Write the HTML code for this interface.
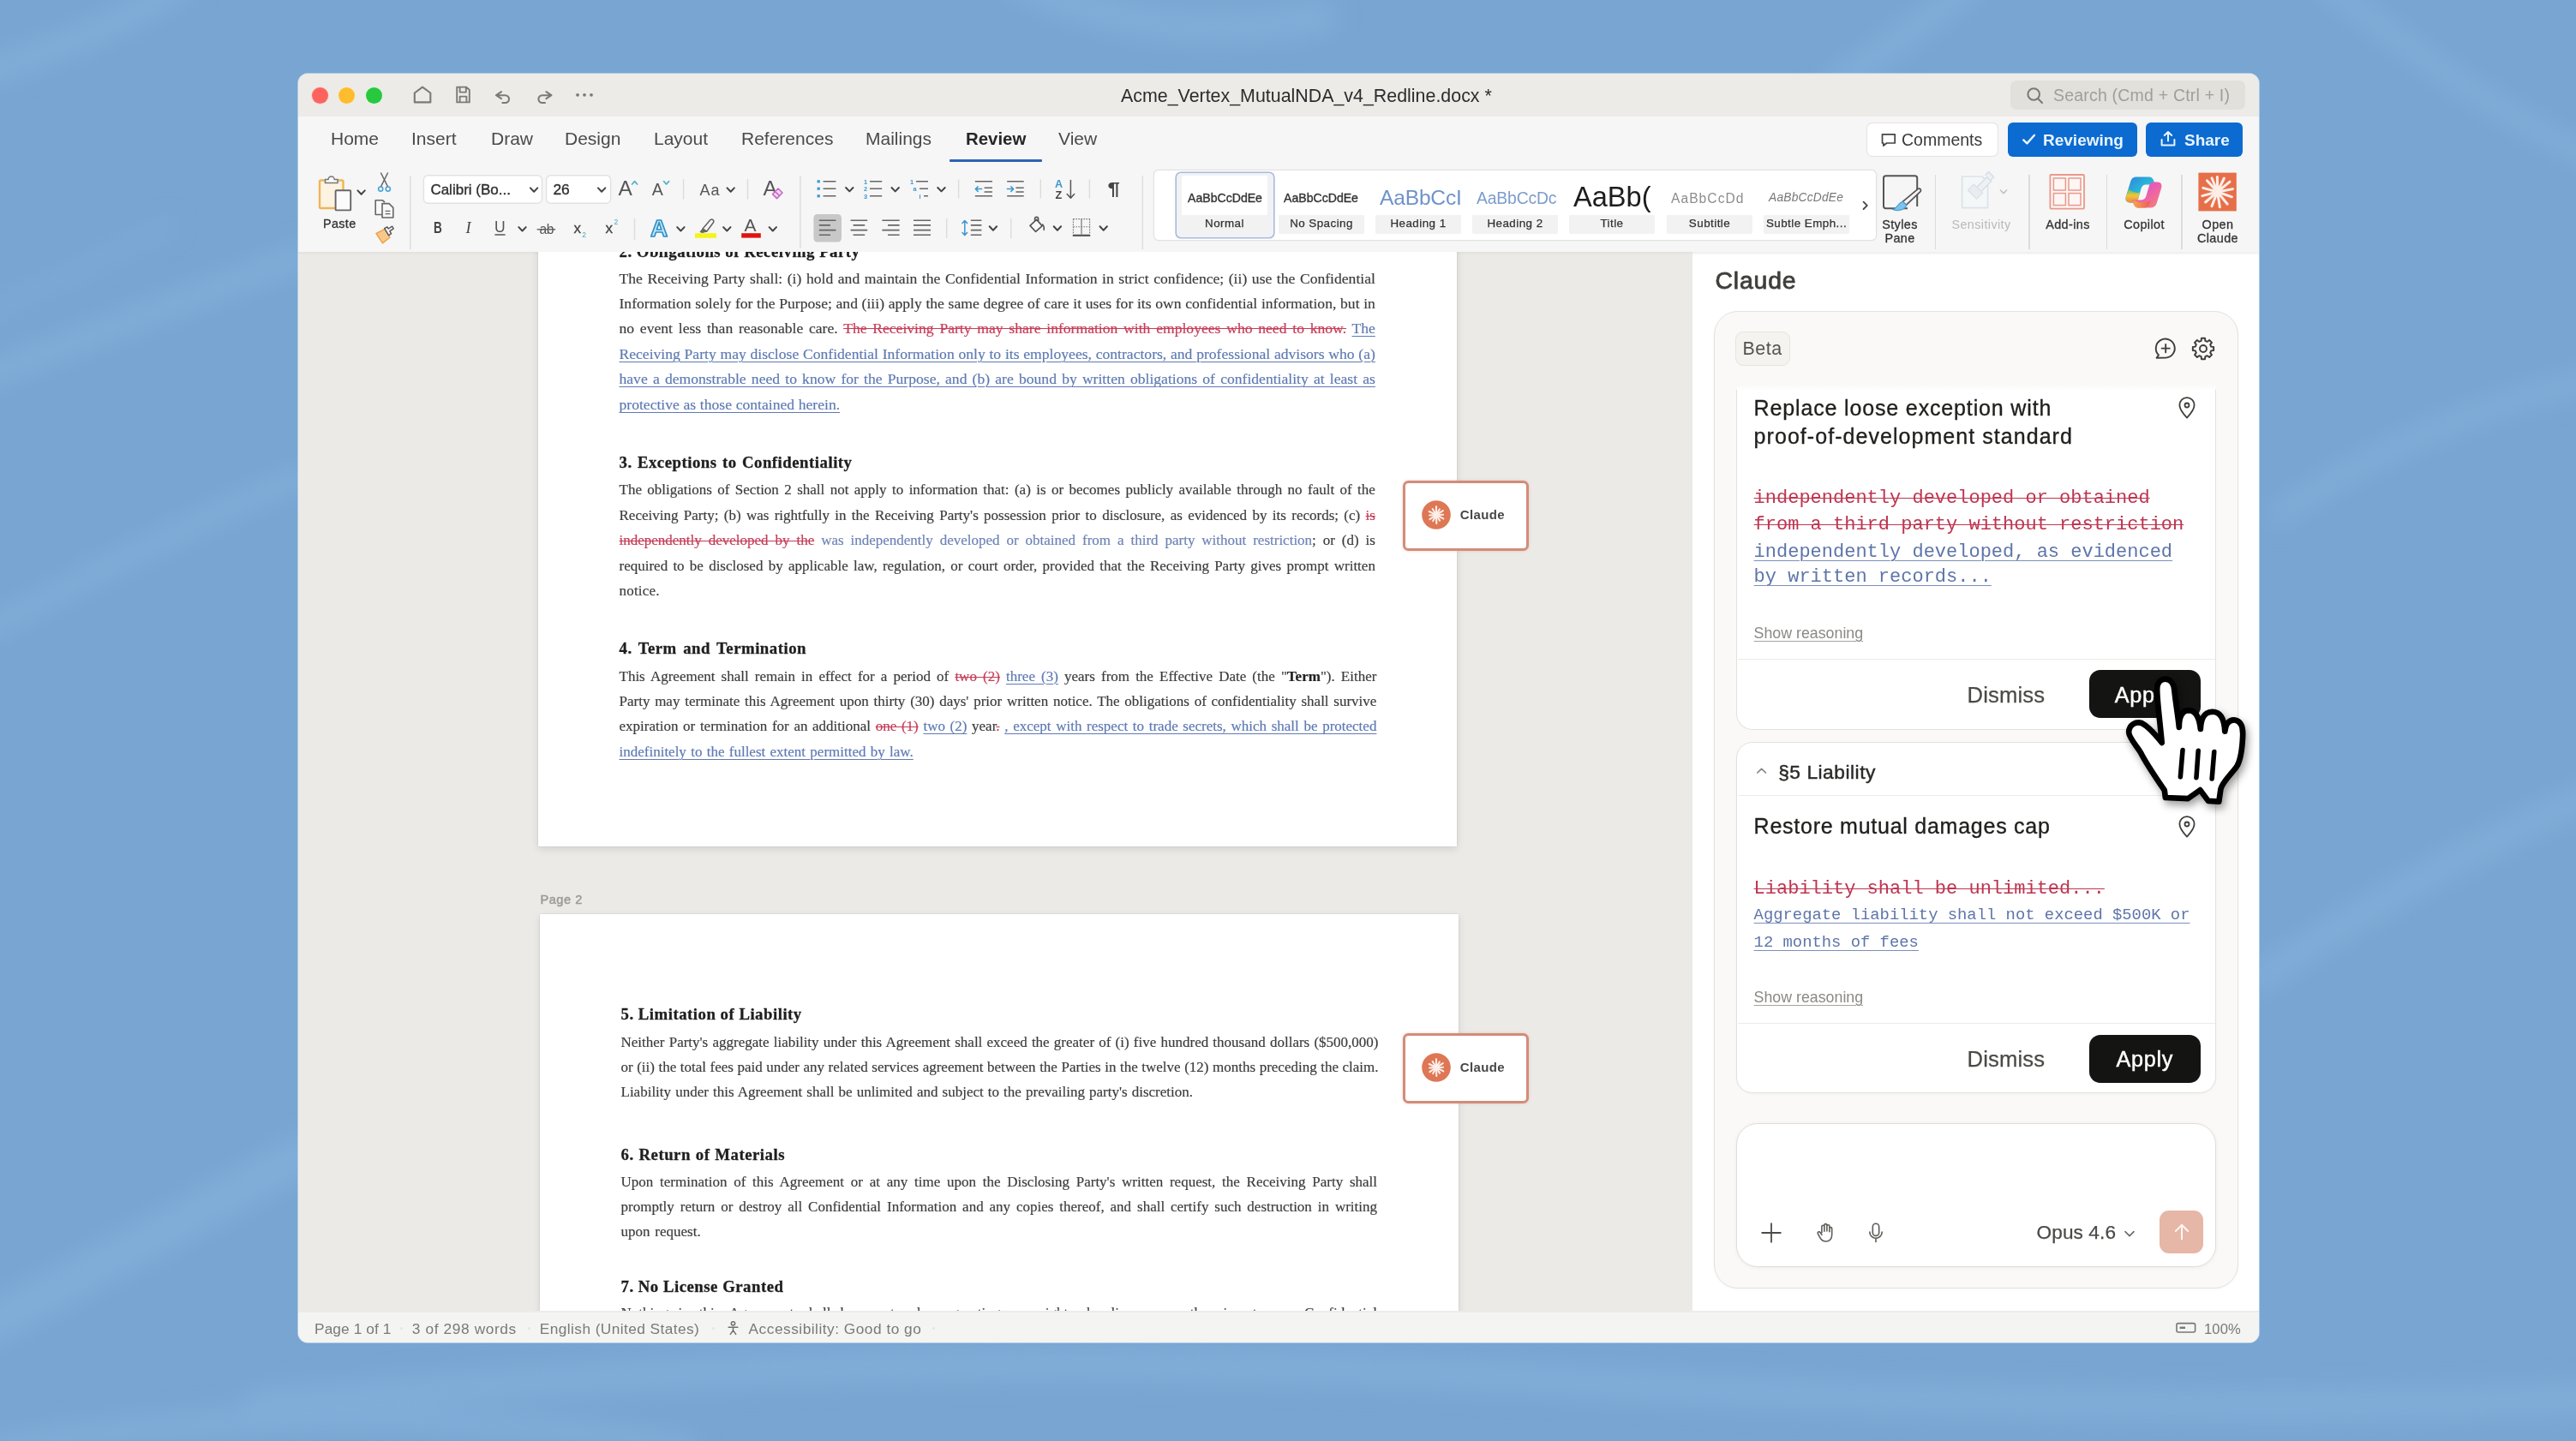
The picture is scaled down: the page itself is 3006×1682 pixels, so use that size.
<!DOCTYPE html>
<html lang="en">
<head>
<meta charset="utf-8">
<title>Acme_Vertex_MutualNDA_v4_Redline.docx</title>
<style>
*{box-sizing:border-box;margin:0;padding:0}
html,body{width:3006px;height:1682px;overflow:hidden}
body{background:#78a5d1;font-family:"Liberation Sans",sans-serif;position:relative;color:#222}
.a{position:absolute}
.t{position:absolute;white-space:nowrap;line-height:1}
#bg{position:absolute;left:0;top:0;width:3006px;height:1682px}
#win{position:absolute;left:348px;top:86px;width:2288px;height:1481px;border-radius:11.5px;overflow:hidden;background:#f6f6f6;box-shadow:0 0 0 1px rgba(225,238,250,.5)}
#pg{position:absolute;left:-348px;top:-86px;width:3006px;height:1682px;will-change:transform}
/* document */
.dl{position:absolute;white-space:nowrap;font-family:"Liberation Serif",serif;font-size:17px;line-height:24px;height:24px;color:#3c3c3c;-webkit-text-stroke:.18px currentColor;text-align:justify;text-align-last:justify;overflow:visible}
.dh{position:absolute;white-space:nowrap;font-family:"Liberation Serif",serif;font-weight:bold;font-size:18.8px;letter-spacing:.5px;line-height:24px;height:24px;color:#1e1e1e;-webkit-text-stroke:.3px #1e1e1e;text-align:justify;text-align-last:justify}
.del{color:#c63c57;text-decoration:line-through;text-decoration-thickness:1.2px}
.ins{color:#5f7ab3;text-decoration:underline;text-decoration-thickness:1.1px;text-underline-offset:3px}
.insn{color:#6e84b6}
.mono{font-family:"Liberation Mono",monospace}
</style>
</head>
<body>
<svg id="bg" viewBox="0 0 3006 1682">
<defs><filter id="bl" x="-20%" y="-20%" width="140%" height="140%"><feGaussianBlur stdDeviation="14"/></filter></defs>
<rect width="3006" height="1682" fill="#78a5d1"/>
<g filter="url(#bl)" fill="none" stroke="#86b2de" stroke-linecap="round" opacity=".6">
<path d="M-40 92 C 60 60, 140 30, 215 -20" stroke-width="32"/>
<path d="M-40 448 C 80 402, 220 348, 352 300" stroke-width="30"/>
<path d="M-40 748 C 80 684, 220 612, 352 556" stroke-width="26"/>
<path d="M-40 380 C 40 340, 120 300, 200 262" stroke-width="12"/>
<path d="M1180 -30 C 1260 20, 1400 50, 1540 20" stroke-width="40"/>
<path d="M2700 -30 C 2800 50, 2920 140, 3060 200" stroke-width="26"/>
<path d="M2140 100 C 2195 62, 2250 24, 2305 -24" stroke-width="32"/>
<path d="M2660 600 C 2780 520, 2900 470, 3040 440" stroke-width="26"/>
<path d="M2640 1140 C 2760 1060, 2880 990, 3040 920" stroke-width="34"/>
<path d="M-60 1570 C 80 1500, 220 1420, 350 1350" stroke-width="48"/>
<path d="M300 1640 C 800 1590, 1300 1580, 1800 1610 C 2200 1640, 2700 1650, 3060 1630" stroke-width="36"/>
<path d="M-40 1700 C 200 1650, 500 1640, 800 1690" stroke-width="30"/>
</g>
</svg>
<div id="win"><div id="pg">
<!-- title bar -->
<div class="a" style="left:348px;top:85px;width:2288px;height:51px;background:#ecebe8"></div>
<div class="a" style="left:363.6px;top:101.6px;width:19px;height:19px;border-radius:50%;background:#fd635d;box-shadow:0 0 0 1px rgba(255,200,200,.5)"></div>
<div class="a" style="left:395.2px;top:101.6px;width:19px;height:19px;border-radius:50%;background:#febc2e;box-shadow:0 0 0 1px rgba(255,235,200,.5)"></div>
<div class="a" style="left:427px;top:101.6px;width:19px;height:19px;border-radius:50%;background:#28c840;box-shadow:0 0 0 1px rgba(200,255,210,.5)"></div>
<svg class="a" style="left:470px;top:92px" width="240" height="40" viewBox="470 92 240 40" fill="none" stroke="#7c7a76" stroke-width="2.1" stroke-linejoin="round" stroke-linecap="round">
<path d="M483.8 119.4 V108.5 L493 101.6 L502.3 108.5 V119.4 Z"/>
<path d="M533.2 101.6 H544.2 L547.8 105 V119.4 H533.2 Z M536.6 101.8 V107.6 H543.8 V101.8 M536.6 119.2 V112.6 H544.4 V119.2" stroke-width="1.9"/>
<path d="M585 107.2 L579 111.2 L585 115.2 M579.4 111.2 H589.6 a4.4 4.4 0 0 1 0 8.8 H586.4"/>
<path d="M637.4 107.2 L643.4 111.2 L637.4 115.2 M643 111.2 H632.8 a4.4 4.4 0 0 0 0 8.8 H636"/>
<g fill="#7c7a76" stroke="none"><circle cx="674" cy="110.8" r="1.9"/><circle cx="682" cy="110.8" r="1.9"/><circle cx="690" cy="110.8" r="1.9"/></g>
</svg>
<div class="t" style="left:1308px;top:102px;font-size:21.4px;color:#2c2c2c;letter-spacing:0px">Acme_Vertex_MutualNDA_v4_Redline.docx *</div>
<div class="a" style="left:2346px;top:94px;width:274px;height:34px;border-radius:7px;background:#e2e0db"></div>
<svg class="a" style="left:2362px;top:99px" width="26" height="26" viewBox="0 0 26 26" fill="none" stroke="#7a7874" stroke-width="2" stroke-linecap="round"><circle cx="11.2" cy="11" r="6.8"/><path d="M16.2 16.2 L21 21"/></svg>
<div class="t" style="left:2396px;top:102.4px;font-size:19.5px;color:#a09e9a;letter-spacing:.2px">Search (Cmd + Ctrl + I)</div>
<!-- tabs row -->
<div class="a" style="left:348px;top:136px;width:2288px;height:158px;background:#f6f6f6"></div>
<style>.tab{position:absolute;top:150px;font-size:21px;line-height:24px;color:#4a4a4a;white-space:nowrap}</style>
<div class="tab" style="left:386px">Home</div>
<div class="tab" style="left:480px">Insert</div>
<div class="tab" style="left:573px">Draw</div>
<div class="tab" style="left:659px">Design</div>
<div class="tab" style="left:763px">Layout</div>
<div class="tab" style="left:865px">References</div>
<div class="tab" style="left:1010px">Mailings</div>
<div class="tab" style="left:1127px;font-weight:bold;color:#262626;font-size:20.4px">Review</div>
<div class="tab" style="left:1235px">View</div>
<div class="a" style="left:1108px;top:186px;width:108.4px;height:3.4px;background:#2f62b4;border-radius:1px"></div>
<!-- right buttons -->
<div class="a" style="left:2179px;top:144px;width:152px;height:38px;border-radius:6px;background:#fff;box-shadow:0 0 0 1px #e4e3e1"></div>
<svg class="a" style="left:2195px;top:155px" width="18" height="18" viewBox="0 0 18 18" fill="none" stroke="#444" stroke-width="1.7" stroke-linejoin="round"><path d="M1.5 1.8 H16.2 V12 H6.6 L2.8 15.2 V12 H1.5 Z"/></svg>
<div class="t" style="left:2219px;top:154px;font-size:19.5px;color:#3a3a3a">Comments</div>
<div class="a" style="left:2343px;top:143px;width:151px;height:40px;border-radius:6px;background:#0b6bd0"></div>
<svg class="a" style="left:2359px;top:154px" width="18" height="18" viewBox="0 0 18 18" fill="none" stroke="#e8f4ff" stroke-width="2.4" stroke-linecap="round" stroke-linejoin="round"><path d="M2.2 9.4 L6.4 13.4 L15 3.8"/></svg>
<div class="t" style="left:2384px;top:154px;font-size:19px;font-weight:bold;color:#e8f4ff">Reviewing</div>
<div class="a" style="left:2504px;top:143px;width:113px;height:40px;border-radius:6px;background:#0b6bd0"></div>
<svg class="a" style="left:2520px;top:152px" width="20" height="20" viewBox="0 0 20 20" fill="none" stroke="#e8f4ff" stroke-width="2" stroke-linecap="round" stroke-linejoin="round"><path d="M10 12.5 V2.2 M5.8 6 L10 2 L14.2 6 M2.6 11 V17.4 H17.4 V11"/></svg>
<div class="t" style="left:2549px;top:154px;font-size:19px;font-weight:bold;color:#e8f4ff">Share</div>
<!-- ribbon left -->
<svg class="a" style="left:348px;top:190px" width="1000" height="104" viewBox="348 190 1000 104" fill="none" font-family="Liberation Sans, sans-serif">
<defs>
<path id="cv" d="M-4.2 -2.2 L0 2.2 L4.2 -2.2" fill="none" stroke="#444" stroke-width="2" stroke-linecap="round" stroke-linejoin="round"/>
</defs>
<!-- separators -->
<g stroke="#dddcda" stroke-width="1.4">
<path d="M478.7 205 V291"/><path d="M797.6 209 V232.5"/><path d="M872.5 209 V232.5"/><path d="M740.5 255 V280"/>
<path d="M933.9 205 V290"/><path d="M1118.6 209.5 V231.6"/><path d="M1214.3 209.5 V231.6"/><path d="M1271.4 209.5 V231.6"/>
<path d="M1104.7 255 V278"/><path d="M1179.7 255 V278"/><path d="M1333.3 205 V291"/>
</g>
<!-- paste -->
<rect x="373" y="210.5" width="27.5" height="32.5" rx="1.5" fill="#fdf3e1" stroke="#f0b458" stroke-width="2.4"/>
<path d="M379.5 213.5 V209.5 H383 a3.6 3.6 0 0 1 7.2 0 H394 V213.5 Z" fill="#fbfbfb" stroke="#777" stroke-width="1.5"/>
<rect x="391.6" y="222.2" width="17.6" height="23.2" rx="1" fill="#fbfbfb" stroke="#666" stroke-width="1.9"/>
<use href="#cv" x="421.6" y="224.6"/>
<text x="377" y="265.9" font-size="14.4" fill="#333" letter-spacing=".35" stroke="#333" stroke-width=".3">Paste</text>
<!-- scissors -->
<g stroke="#666" stroke-width="1.5" stroke-linecap="round"><path d="M444.6 202 L452.4 217.6 M452.4 202 L444.6 217.6"/></g>
<g stroke="#4aa3d6" stroke-width="1.6"><circle cx="444.2" cy="220.6" r="2.6"/><circle cx="452.8" cy="220.6" r="2.6"/></g>
<!-- copy -->
<g stroke="#666" stroke-width="1.6" stroke-linejoin="round" fill="#f8f8f8"><path d="M445.5 250.5 H438.2 V233.8 H446.5 L449 236.2"/><path d="M446 237.6 H454 L458.8 242.4 V254 H446 Z"/><path d="M449.6 246.4 H455.4 M449.6 249.6 H455.4" stroke-width="1.2"/></g>
<!-- format painter -->
<g stroke-linejoin="round"><path d="M439 272.5 L449.5 267.2 L455 277 L446.5 283.8 Z" fill="#f8c98a" stroke="#f0a24a" stroke-width="1.5"/><path d="M448.6 266.6 L451.8 264.8 L453.2 267 L457.6 264.2 L459.2 266.8 L454.8 269.8 L456.6 272.6 L453.6 274.8 Z" fill="#f4f4f4" stroke="#555" stroke-width="1.4"/></g>
<!-- font boxes -->
<rect x="494.4" y="204.8" width="138" height="32.4" rx="5" fill="#fff" stroke="#e2e2e2" stroke-width="1.4"/>
<rect x="637.6" y="204.8" width="75" height="32.4" rx="5" fill="#fff" stroke="#e2e2e2" stroke-width="1.4"/>
<text x="502.4" y="226.8" font-size="17" fill="#2e2e2e" stroke="#2e2e2e" stroke-width=".35">Calibri (Bo...</text>
<use href="#cv" x="623.1" y="221.6"/>
<text x="645.4" y="226.8" font-size="17.4" fill="#2e2e2e" stroke="#2e2e2e" stroke-width=".35">26</text>
<use href="#cv" x="702.1" y="221.6"/>
<!-- grow / shrink -->
<text x="721.6" y="227.8" font-size="24.5" fill="#555">A</text>
<path d="M737.6 215 L740.6 211.6 L743.6 215" stroke="#4fb0c8" stroke-width="1.7" stroke-linecap="round" stroke-linejoin="round"/>
<text x="760.8" y="227.8" font-size="19.6" fill="#555">A</text>
<path d="M774.6 211.6 L777.6 215 L780.6 211.6" stroke="#4fb0c8" stroke-width="1.7" stroke-linecap="round" stroke-linejoin="round"/>
<text x="816.4" y="227.8" font-size="18" fill="#555" letter-spacing="1.2">Aa</text>
<use href="#cv" x="852.7" y="221.6"/>
<text x="890.6" y="227.8" font-size="24.5" fill="#555">A</text>
<path d="M901.6 226.6 L908 220 L913 225 L906.6 231.6 Z M904.6 223.6 L909.6 228.6" fill="#f3d9f2" stroke="#c66cc4" stroke-width="1.6" stroke-linejoin="round"/>
<!-- row 2 -->
<text x="506" y="271.6" font-size="18" font-weight="bold" fill="#444" textLength="9.8" lengthAdjust="spacingAndGlyphs">B</text>
<text x="543.4" y="271.6" font-size="18.5" font-style="italic" font-family="Liberation Serif, serif" fill="#444">I</text>
<text x="577" y="270.8" font-size="17.5" fill="#555">U</text>
<path d="M577.4 274 H589.6" stroke="#555" stroke-width="1.5"/>
<use href="#cv" x="609.5" y="267.3"/>
<text x="629.4" y="273" font-size="15.6" fill="#555" letter-spacing="-.3">ab</text>
<path d="M626.6 267.8 H648.2" stroke="#555" stroke-width="1.3"/>
<text x="669.6" y="271.6" font-size="17" fill="#444" stroke="#444" stroke-width=".3">x</text>
<text x="679.2" y="277.4" font-size="8.6" fill="#4fa8c8">2</text>
<text x="706.4" y="271.6" font-size="17" fill="#444" stroke="#444" stroke-width=".3">x</text>
<text x="716.4" y="261.8" font-size="8.6" fill="#4fa8c8">2</text>
<!-- text effects A -->
<text x="759" y="276" font-size="28" font-weight="bold" fill="#c3e9fa" stroke="#2f8fc6" stroke-width="1.7" stroke-linejoin="round">A</text>
<use href="#cv" x="794.4" y="267.3"/>
<!-- highlighter -->
<path d="M820 267 L829 256.6 a2.4 2.4 0 0 1 3.6 3 L824.6 270.2 Z" fill="#f6f6f6" stroke="#666" stroke-width="1.6" stroke-linejoin="round"/>
<path d="M820 267 L824.6 270.2 L819.4 271.6 L817 270.6 Z" fill="#666" stroke="#666" stroke-width="1"/>
<rect x="811" y="272.2" width="25" height="5.6" fill="#f4f41c"/>
<use href="#cv" x="848.3" y="267.3"/>
<text x="868.6" y="270.4" font-size="21" fill="#555">A</text>
<rect x="865.2" y="272.2" width="22.6" height="5.4" fill="#e11212"/>
<use href="#cv" x="901.8" y="267.3"/>
<!-- bullets -->
<g stroke="#666" stroke-width="1.5"><path d="M960.6 211.7 H975.4 M960.6 220.2 H975.4 M960.6 228.8 H975.4"/></g>
<g fill="#3c97cf"><rect x="953.6" y="210.2" width="3.2" height="3.2"/><rect x="953.6" y="218.6" width="3.2" height="3.2"/><rect x="953.6" y="227.2" width="3.2" height="3.2"/></g>
<use href="#cv" x="991.3" y="221.2"/>
<g stroke="#666" stroke-width="1.5"><path d="M1015 211.7 H1029.2 M1015 220.2 H1029.2 M1015 228.8 H1029.2"/></g>
<g fill="#3c97cf" font-size="7.4" font-weight="bold"><text x="1008" y="214.6">1</text><text x="1008" y="223.2">2</text><text x="1008" y="231.8">3</text></g>
<use href="#cv" x="1044.7" y="221.2"/>
<g stroke="#666" stroke-width="1.5"><path d="M1069 211.7 H1083 M1073 220.2 H1083 M1078 228.8 H1083"/></g>
<g fill="#3c97cf" font-size="7.4" font-weight="bold"><text x="1062" y="214.6">1</text><text x="1065.6" y="223.2">a</text><text x="1072.6" y="231.6">i</text></g>
<use href="#cv" x="1098.5" y="221.2"/>
<!-- indents -->
<g stroke="#666" stroke-width="1.5"><path d="M1137.8 211.7 H1158 M1148.6 219.2 H1158 M1148.6 224 H1158 M1137.8 228.8 H1158"/></g>
<path d="M1145.6 220.6 H1138.4 M1141.2 217.8 L1138.4 220.6 L1141.2 223.4" stroke="#3c97cf" stroke-width="1.5" stroke-linecap="round" stroke-linejoin="round"/>
<g stroke="#666" stroke-width="1.5"><path d="M1175.2 211.7 H1194.7 M1185.4 219.2 H1194.7 M1185.4 224 H1194.7 M1175.2 228.8 H1194.7"/></g>
<path d="M1175.4 220.6 H1182.6 M1179.8 217.8 L1182.6 220.6 L1179.8 223.4" stroke="#3c97cf" stroke-width="1.5" stroke-linecap="round" stroke-linejoin="round"/>
<!-- sort -->
<text x="1231" y="219.4" font-size="12.6" font-weight="bold" fill="#3c97cf">A</text>
<text x="1231.4" y="232.4" font-size="12.6" font-weight="bold" fill="#444">Z</text>
<path d="M1249.4 210.6 V231 M1245.2 226.6 L1249.4 231.2 L1253.6 226.6" stroke="#555" stroke-width="1.5" stroke-linecap="round" stroke-linejoin="round"/>
<!-- pilcrow -->
<text x="1292.6" y="227.4" font-size="20.5" font-weight="bold" fill="#444" textLength="14.4" lengthAdjust="spacingAndGlyphs">¶</text>
<!-- align -->
<rect x="949.4" y="250" width="32.6" height="32.6" rx="4.5" fill="#c8c8c8"/>
<g stroke="#666" stroke-width="1.6"><path d="M955.8 257.2 H975.4 M955.8 262.9 H969 M955.8 268.6 H975.4 M955.8 274.3 H969"/>
<path d="M992.6 257.2 H1012.2 M995.6 262.9 H1009.2 M992.6 268.6 H1012.2 M995.6 274.3 H1009.2"/>
<path d="M1029.4 257.2 H1049.6 M1036 262.9 H1049.6 M1029.4 268.6 H1049.6 M1036 274.3 H1049.6"/>
<path d="M1066 257.2 H1086 M1066 262.9 H1086 M1066 268.6 H1086 M1066 274.3 H1086"/>
<path d="M1132.8 257.2 H1145.4 M1132.8 262.9 H1145.4 M1132.8 268.6 H1145.4 M1132.8 274.3 H1145.4"/></g>
<path d="M1125.8 258 V274 M1123 260.6 L1125.8 257.6 L1128.6 260.6 M1123 271.6 L1125.8 274.6 L1128.6 271.6" stroke="#3c97cf" stroke-width="1.5" stroke-linecap="round" stroke-linejoin="round"/>
<use href="#cv" x="1158.9" y="266.5"/>
<!-- bucket -->
<path d="M1202 263.4 L1209.6 256.4 L1216.2 263.6 L1208.6 270.4 Z M1207.6 258 V255.4 a2 2 0 0 1 4 0 V258.6" stroke="#555" stroke-width="1.6" stroke-linejoin="round" fill="#f8f8f8"/>
<path d="M1216.6 262 q2.4 2.6 1.6 6.4" stroke="#555" stroke-width="1.5" stroke-linecap="round"/>
<use href="#cv" x="1233.9" y="266.5"/>
<!-- borders -->
<g stroke="#777" stroke-width="1.1" stroke-dasharray="1.6 1.4"><path d="M1252.4 255.6 H1271.6 M1252.4 255.6 V273.6 M1271.6 255.6 V273.6 M1252.4 264.8 H1271.6"/></g>
<path d="M1262 255.6 V273.6" stroke="#777" stroke-width="1.2"/>
<path d="M1251.8 274.8 H1272.2" stroke="#555" stroke-width="2.2"/>
<use href="#cv" x="1287.7" y="266.5"/>
</svg>
<!-- ribbon right: styles gallery -->
<div class="a" style="left:1347px;top:199px;width:842px;height:81px;border-radius:5px;background:#fff;box-shadow:0 0 0 1.2px #e2e2e2"></div>
<style>
.st{position:absolute;top:205px;width:100px;height:68px;background:#f2f2f2;border-radius:2px;overflow:hidden}
.st .pv{position:absolute;left:0;top:0;width:100px;height:46px;background:#fff;overflow:hidden;white-space:nowrap}
.st .pv span{position:absolute;left:0;white-space:nowrap;line-height:1}
.st .lb{position:absolute;left:0;top:46px;width:100px;text-align:center;font-size:13.4px;line-height:20px;color:#333;letter-spacing:.45px;-webkit-text-stroke:.25px #333;white-space:nowrap}
.rl{position:absolute;font-size:14.4px;line-height:16.4px;color:#333;text-align:center;letter-spacing:.4px;-webkit-text-stroke:.3px #333;white-space:nowrap}
</style>
<div class="a" style="left:1373px;top:202px;width:113px;height:75px;border-radius:5px;background:#f1f2f5;box-shadow:0 0 0 1.6px #a9bad8"></div>
<div class="st" style="left:1379px"><div class="pv"><span style="left:7px;top:19px;font-size:14.1px;color:#333;-webkit-text-stroke:.35px #333">AaBbCcDdEe</span></div><div class="lb">Normal</div></div>
<div class="st" style="left:1492px"><div class="pv"><span style="left:6px;top:19px;font-size:14.1px;color:#333;-webkit-text-stroke:.35px #333">AaBbCcDdEe</span></div><div class="lb">No Spacing</div></div>
<div class="st" style="left:1605px"><div class="pv"><span style="left:5px;top:14px;font-size:24.6px;color:#6f93c8;letter-spacing:-.2px">AaBbCcI</span></div><div class="lb">Heading 1</div></div>
<div class="st" style="left:1718px"><div class="pv"><span style="left:5px;top:16.6px;font-size:19.4px;color:#7d9dcd;letter-spacing:-.2px">AaBbCcDc</span></div><div class="lb">Heading 2</div></div>
<div class="st" style="left:1831px"><div class="pv"><span style="left:5px;top:9px;font-size:32.6px;color:#1d1d1d">AaBb(</span></div><div class="lb">Title</div></div>
<div class="st" style="left:1945px"><div class="pv"><span style="left:5px;top:18.6px;font-size:15.6px;color:#8c8c8c;letter-spacing:1.05px">AaBbCcDd</span></div><div class="lb">Subtitle</div></div>
<div class="st" style="left:2058px"><div class="pv"><span style="left:6px;top:19.4px;font-size:13.8px;color:#777;font-style:italic;letter-spacing:.2px">AaBbCcDdEe</span></div><div class="lb">Subtle Emph...</div></div>
<svg class="a" style="left:2170px;top:230px" width="14" height="20" viewBox="0 0 14 20" fill="none" stroke="#444" stroke-width="1.8" stroke-linecap="round" stroke-linejoin="round"><path d="M4.6 5.6 L8.8 9.8 L4.6 14"/></svg>
<!-- big buttons -->
<svg class="a" style="left:2190px;top:196px" width="440" height="56" viewBox="2190 196 440 56" fill="none">
<g stroke="#dddcda" stroke-width="1.4"></g>
<!-- styles pane -->
<path d="M2226 243.2 H2200.6 a2.6 2.6 0 0 1 -2.6 -2.6 V207.8 a2.6 2.6 0 0 1 2.6 -2.6 H2234.6 a2.6 2.6 0 0 1 2.6 2.6 V241" stroke="#555" stroke-width="2"/>
<path d="M2238.6 220.2 a2.2 2.2 0 0 1 2.6 3.2 L2224.6 239.2 L2220 235.6 Z" fill="#f4f4f4" stroke="#555" stroke-width="1.7" stroke-linejoin="round"/>
<path d="M2220 235.4 L2224.8 239.2 C2223 244.6 2215.6 247.2 2209.2 244.6 C2213.6 243.4 2214.6 237.4 2220 235.4 Z" fill="#7dc3ea" stroke="#4da3d8" stroke-width="1.2"/>
<!-- sensitivity (disabled) -->
<g opacity=".55"><path d="M2289.6 206 H2313 L2319.6 212.6 V242.6 H2289.6 Z" fill="#f4f8fb" stroke="#c3d3e2" stroke-width="1.6"/><path d="M2306 219.4 L2318.6 206.6 L2323.6 211.6 L2311 224.4 Z M2316.6 204.6 L2320.6 200.6 L2326.6 206.6 L2322.6 210.6" fill="#e6edf4" stroke="#c0cede" stroke-width="1.5"/><path d="M2296.4 222 L2303.4 215 L2313.6 225.2 L2306.6 232.2 Z" fill="#dfe7ef" stroke="#c3d0dd" stroke-width="1.2"/></g>
<path d="M2334.4 222 L2338 225.6 L2341.6 222" stroke="#c4c4c4" stroke-width="1.7" stroke-linecap="round" stroke-linejoin="round"/>
<!-- add-ins -->
<g stroke="#e8998b" fill="#fdf6f4"><rect x="2392.4" y="204" width="39.6" height="39.6" stroke-width="1.8" rx="1"/><g stroke-width="1.5"><rect x="2396.4" y="208" width="14" height="14"/><rect x="2414" y="208" width="14" height="14"/><rect x="2396.4" y="225.6" width="14" height="14"/><rect x="2414" y="225.6" width="14" height="14"/></g></g>
<!-- copilot -->
<defs>
<linearGradient id="cpa" x1="0" y1="0" x2="1" y2="1"><stop offset="0" stop-color="#2c7fe0"/><stop offset=".5" stop-color="#2bb7d8"/><stop offset="1" stop-color="#37c36f"/></linearGradient>
<linearGradient id="cpb" x1="0" y1="0" x2="0" y2="1"><stop offset="0" stop-color="#3ec27a"/><stop offset=".5" stop-color="#f2c43a"/><stop offset="1" stop-color="#f08a3c"/></linearGradient>
<linearGradient id="cpc" x1="0" y1="0" x2="1" y2="1"><stop offset="0" stop-color="#b35ae8"/><stop offset=".5" stop-color="#ec5fae"/><stop offset="1" stop-color="#f7866a"/></linearGradient>
<linearGradient id="cpd" x1="0" y1="0" x2="1" y2="0"><stop offset="0" stop-color="#f3a64a"/><stop offset="1" stop-color="#ee5a5a"/></linearGradient>
</defs>
<path d="M2493 206.4 H2507.6 C2511 206.4 2512.6 208.6 2513.4 211.4 L2514.6 215.4 H2504.4 C2501 215.4 2499.4 217.2 2498.6 220 L2495 232.4 C2494.2 235 2492.4 236.4 2490 236.4 H2485.4 C2481.6 236.4 2479.6 233.6 2480.8 229.6 L2486.4 211.2 C2487.4 208 2489.6 206.4 2493 206.4 Z" fill="url(#cpa)"/>
<path d="M2484 220 L2481 229.6 C2479.8 233.6 2481.6 236.4 2485.4 236.4 H2490 C2492.4 236.4 2494.2 235 2495 232.4 L2497.2 225 C2493 225.4 2487 224 2484 220 Z" fill="url(#cpb)"/>
<path d="M2510 242.4 H2495.4 C2492 242.4 2490.4 240.2 2489.6 237.4 L2488.4 233.4 H2498.6 C2502 233.4 2503.6 231.6 2504.4 228.8 L2508 216.4 C2508.8 213.8 2510.6 212.4 2513 212.4 H2517.6 C2521.4 212.4 2523.4 215.2 2522.2 219.2 L2516.600 237.6 C2515.600 240.800 2513.400 242.4 2510 242.4 Z" fill="url(#cpc)"/>
<path d="M2489.6 237.4 C2490.4 240.2 2492 242.4 2495.4 242.4 H2503 C2506 242.4 2507.6 240.6 2508.4 238 L2509.6 234 C2505.600 236.600 2497 237 2489.6 233.4 Z" fill="url(#cpd)"/>
<!-- claude -->
<rect x="2565.4" y="201.6" width="44.4" height="44.8" fill="#e66f49"/>
<circle cx="2587.6" cy="224" r="4.2" fill="#fdf0ea"/><g stroke="#fdeee8" stroke-width="3" stroke-linecap="round">
<path d="M2587.6 224 L2587.4 206.4"/><path d="M2587.6 224 L2595.4 208"/><path d="M2587.6 224 L2602 212.2"/><path d="M2587.6 224 L2605.4 220.6"/><path d="M2587.6 224 L2604.4 229.8"/><path d="M2587.6 224 L2599.2 238.2"/><path d="M2587.6 224 L2590.4 241.8"/><path d="M2587.6 224 L2581 240.6"/><path d="M2587.6 224 L2573.6 236"/><path d="M2587.6 224 L2569.8 228.6"/><path d="M2587.6 224 L2570.8 219.4"/><path d="M2587.6 224 L2575.4 210.8"/><path d="M2587.6 224 L2581 207.8"/>
</g>
</svg>
<div class="rl" style="left:2187px;top:253.6px;width:60px">Styles<br>Pane</div>
<div class="rl" style="left:2262px;top:253.6px;width:100px;color:#b9b9b9;-webkit-text-stroke:0">Sensitivity</div>
<div class="rl" style="left:2373px;top:253.6px;width:80px">Add-ins</div>
<div class="rl" style="left:2462px;top:253.6px;width:80px">Copilot</div>
<div class="rl" style="left:2548px;top:253.6px;width:80px">Open<br>Claude</div>
<div class="a" style="left:2257.7px;top:204px;width:1.4px;height:87px;background:#dddcda"></div>
<div class="a" style="left:2367.2px;top:204px;width:1.4px;height:87px;background:#dddcda"></div>
<div class="a" style="left:2458px;top:204px;width:1.4px;height:87px;background:#dddcda"></div>
<div class="a" style="left:2545.3px;top:204px;width:1.4px;height:87px;background:#dddcda"></div>
<!-- document area -->
<div class="a" style="left:348px;top:294px;width:1628px;height:1238px;overflow:hidden;background:#ebeae7">
<div class="a" style="left:-348px;top:-294px;width:3006px;height:1682px">
<div class="a" style="left:348px;top:294px;width:1628px;height:4px;background:linear-gradient(#e2e1de,rgba(235,234,231,0))"></div>
<div class="a" style="left:628px;top:240px;width:1072px;height:748.4px;background:#fff;box-shadow:0 3px 9px rgba(0,0,0,.11),0 0 1.5px rgba(0,0,0,.14)"></div>
<div class="a" style="left:630px;top:1067.4px;width:1072px;height:700px;background:#fff;box-shadow:0 3px 9px rgba(0,0,0,.11),0 0 1.5px rgba(0,0,0,.14)"></div>
<div class="t" style="left:630.4px;top:1043.4px;font-size:14.6px;color:#9a9a98;letter-spacing:.55px;-webkit-text-stroke:.45px #9a9a98">Page 2</div>
<div class="dh" style="left:722.5px;top:281.8px;width:277px">2. Obligations of Receiving Party</div>
<div class="dl" style="left:722.5px;top:312.6px;width:882.4px;font-size:17.6px">The Receiving Party shall: (i) hold and maintain the Confidential Information in strict confidence; (ii) use the Confidential</div>
<div class="dl" style="left:722.5px;top:341.9px;width:882.4px;font-size:17.6px">Information solely for the Purpose; and (iii) apply the same degree of care it uses for its own confidential information, but in</div>
<div class="dl" style="left:722.5px;top:371.4px;width:882.4px;font-size:17.6px">no event less than reasonable care. <span class="del">The Receiving Party may share information with employees who need to know.</span> <span class="ins">The</span></div>
<div class="dl" style="left:722.5px;top:400.8px;width:882.4px;font-size:17.6px"><span class="ins">Receiving Party may disclose Confidential Information only to its employees, contractors, and professional advisors who (a)</span></div>
<div class="dl" style="left:722.5px;top:430.2px;width:882.4px;font-size:17.6px"><span class="ins">have a demonstrable need to know for the Purpose, and (b) are bound by written obligations of confidentiality at least as</span></div>
<div class="dl" style="left:722.5px;top:459.6px;width:257.6px;font-size:17.6px"><span class="ins">protective as those contained herein.</span></div>
<div class="dh" style="left:722.5px;top:528.1px;width:272px">3. Exceptions to Confidentiality</div>
<div class="dl" style="left:722.5px;top:560.2px;width:882.4px">The obligations of Section 2 shall not apply to information that: (a) is or becomes publicly available through no fault of the</div>
<div class="dl" style="left:722.5px;top:589.6px;width:882.4px">Receiving Party; (b) was rightfully in the Receiving Party's possession prior to disclosure, as evidenced by its records; (c) <span class="del">is</span></div>
<div class="dl" style="left:722.5px;top:619.0px;width:882.4px"><span class="del">independently developed by the</span> <span class="insn">was independently developed or obtained from a third party without restriction</span>; or (d) is</div>
<div class="dl" style="left:722.5px;top:648.5px;width:882.4px">required to be disclosed by applicable law, regulation, or court order, provided that the Receiving Party gives prompt written</div>
<div class="dl" style="left:722.5px;top:677.9px;width:45.5px;letter-spacing:.2px">notice.</div>
<div class="dh" style="left:722.5px;top:744.5px;width:218.5px">4. Term and Termination</div>
<div class="dl" style="left:722.5px;top:777.6px;width:883.9px">This Agreement shall remain in effect for a period of <span class="del">two (2)</span> <span class="ins">three (3)</span> years from the Effective Date (the "<b style="color:#222">Term</b>"). Either</div>
<div class="dl" style="left:722.5px;top:807.0px;width:883.9px">Party may terminate this Agreement upon thirty (30) days' prior written notice. The obligations of confidentiality shall survive</div>
<div class="dl" style="left:722.5px;top:836.4px;width:883.9px">expiration or termination for an additional <span class="del">one (1)</span> <span class="ins">two (2)</span> year<span class="del">.</span> <span class="ins">, except with respect to trade secrets, which shall be protected</span></div>
<div class="dl" style="left:722.5px;top:865.8px;width:343.3px"><span class="ins">indefinitely to the fullest extent permitted by law.</span></div>
<div class="dh" style="left:724.5px;top:1172.4px;width:211px">5. Limitation of Liability</div>
<div class="dl" style="left:724.5px;top:1204.5px;width:884px">Neither Party's aggregate liability under this Agreement shall exceed the greater of (i) five hundred thousand dollars ($500,000)</div>
<div class="dl" style="left:724.5px;top:1234.0px;width:884px">or (ii) the total fees paid under any related services agreement between the Parties in the twelve (12) months preceding the claim.</div>
<div class="dl" style="left:724.5px;top:1263.3px;width:667.5px">Liability under this Agreement shall be unlimited and subject to the prevailing party's discretion.</div>
<div class="dh" style="left:724.5px;top:1335.9px;width:191.5px">6. Return of Materials</div>
<div class="dl" style="left:724.5px;top:1367.6px;width:882.5px">Upon termination of this Agreement or at any time upon the Disclosing Party's written request, the Receiving Party shall</div>
<div class="dl" style="left:724.5px;top:1397.0px;width:882.5px">promptly return or destroy all Confidential Information and any copies thereof, and shall certify such destruction in writing</div>
<div class="dl" style="left:724.5px;top:1426.4px;width:93.2px">upon request.</div>
<div class="dh" style="left:724.5px;top:1489.6px;width:186.8px">7. No License Granted</div>
<div class="dl" style="left:724.5px;top:1521.2px;width:882.5px">Nothing in this Agreement shall be construed as granting any rights, by license or otherwise, to any Confidential</div>
<div class="a" style="left:1636.8px;top:561px;width:147px;height:82.4px;background:#fff;border:3.4px solid #d38c7a;border-radius:6.5px;box-shadow:0 0 3px rgba(225,150,130,.5)"></div>
<svg class="a" style="left:1658.0px;top:583.2px" width="36" height="36" viewBox="-18 -18 36 36"><circle r="16.8" fill="#de7755"/><circle r="3.4" fill="#fdf1eb"/><g stroke="#fdeee7" stroke-width="2.1" stroke-linecap="round">
<path d="M0 0 L0.0 -9.6"/>
<path d="M0 0 L3.8 -6.6"/>
<path d="M0 0 L7.8 -4.9"/>
<path d="M0 0 L8.0 -0.3"/>
<path d="M0 0 L8.3 4.4"/>
<path d="M0 0 L4.1 6.6"/>
<path d="M0 0 L0.3 10.0"/>
<path d="M0 0 L-3.8 7.1"/>
<path d="M0 0 L-7.6 5.1"/>
<path d="M0 0 L-7.8 0.5"/>
<path d="M0 0 L-8.3 -4.0"/>
<path d="M0 0 L-4.3 -7.0"/>
</g></svg>
<div class="t" style="left:1703.8px;top:592.9px;font-size:15px;font-weight:bold;color:#474747;letter-spacing:.35px">Claude</div>
<div class="a" style="left:1636.8px;top:1206px;width:147px;height:82.4px;background:#fff;border:3.4px solid #d38c7a;border-radius:6.5px;box-shadow:0 0 3px rgba(225,150,130,.5)"></div>
<svg class="a" style="left:1658.0px;top:1228.2px" width="36" height="36" viewBox="-18 -18 36 36"><circle r="16.8" fill="#de7755"/><circle r="3.4" fill="#fdf1eb"/><g stroke="#fdeee7" stroke-width="2.1" stroke-linecap="round">
<path d="M0 0 L0.0 -9.6"/>
<path d="M0 0 L3.8 -6.6"/>
<path d="M0 0 L7.8 -4.9"/>
<path d="M0 0 L8.0 -0.3"/>
<path d="M0 0 L8.3 4.4"/>
<path d="M0 0 L4.1 6.6"/>
<path d="M0 0 L0.3 10.0"/>
<path d="M0 0 L-3.8 7.1"/>
<path d="M0 0 L-7.6 5.1"/>
<path d="M0 0 L-7.8 0.5"/>
<path d="M0 0 L-8.3 -4.0"/>
<path d="M0 0 L-4.3 -7.0"/>
</g></svg>
<div class="t" style="left:1703.8px;top:1237.9px;font-size:15px;font-weight:bold;color:#474747;letter-spacing:.35px">Claude</div>
</div></div>
<!-- claude panel -->
<style>
.pt{position:absolute;white-space:nowrap;line-height:1;font-size:25px;letter-spacing:.85px;color:#1f1f1d;-webkit-text-stroke:.35px #1f1f1d}
.mn{position:absolute;white-space:nowrap;line-height:1;font-family:"Liberation Mono",monospace;font-size:22px}
.md{color:#bd3550;text-decoration:line-through;text-decoration-thickness:1.4px}
.mi{color:#5e75a9;text-decoration:underline;text-decoration-thickness:1.2px;text-underline-offset:4px;text-decoration-color:#7d90ba}
.sr{position:absolute;white-space:nowrap;line-height:1;font-size:17.8px;color:#8b8984;text-decoration:underline;text-decoration-thickness:1.1px;text-underline-offset:3px;text-decoration-color:#a5a39e}
.dm{position:absolute;white-space:nowrap;line-height:1;font-size:25.6px;color:#4b4a46;letter-spacing:.15px;-webkit-text-stroke:.25px #4b4a46}
.ap{position:absolute;width:130px;height:56px;border-radius:13px;background:#141413}
.apt{position:absolute;white-space:nowrap;line-height:1;font-size:25.2px;color:#fff;letter-spacing:.7px;-webkit-text-stroke:.45px #fff}
</style>
<div class="a" style="left:1975px;top:294px;width:661px;height:1238px;background:#fff;overflow:hidden">
<div class="a" style="left:-1975px;top:-294px;width:3006px;height:1682px">
<div class="a" style="left:1975px;top:294px;width:661px;height:4px;background:linear-gradient(#ececeb,#fff)"></div>
<div class="t" style="left:2001.4px;top:313px;font-size:28.4px;color:#3e3e3c;letter-spacing:.85px;-webkit-text-stroke:.8px #3e3e3c">Claude</div>
<!-- outer card -->
<div class="a" style="left:2000px;top:362.5px;width:612px;height:1141.5px;border-radius:28px;background:#faf9f7;border:1.5px solid #e4e2dd;box-shadow:0 1px 3px rgba(0,0,0,.04)"></div>
<!-- card 1 (scrolled under header) -->
<div class="a" style="left:2027px;top:447.5px;width:558px;height:8px;background:linear-gradient(rgba(255,255,255,0),#fff)"></div>
<div class="a" style="left:2026px;top:455px;width:560px;height:397px;background:#fff;border:1.5px solid #e3e1dc;border-top:none;border-radius:0 0 19px 19px"></div>
<div class="a" style="left:2027.5px;top:768.5px;width:557px;height:1.5px;background:#ecebe7"></div>
<!-- card 2 -->
<div class="a" style="left:2026px;top:865.6px;width:560px;height:410px;background:#fff;border:1.5px solid #e3e1dc;border-radius:19px;box-shadow:0 1px 3px rgba(0,0,0,.035)"></div>
<div class="a" style="left:2027.5px;top:927.5px;width:557px;height:1.5px;background:#ecebe7"></div>
<div class="a" style="left:2027.5px;top:1193.5px;width:557px;height:1.5px;background:#ecebe7"></div>
<!-- header -->
<div class="a" style="left:2025px;top:387px;width:63.5px;height:39.5px;border-radius:9px;background:#f5f3ef;border:1.3px solid #e7e4de"></div>
<div class="t" style="left:2033.4px;top:396.6px;font-size:21.4px;color:#55534e;letter-spacing:.55px">Beta</div>
<svg class="a" style="left:2511px;top:390px" width="34" height="34" viewBox="0 0 34 34" fill="none" stroke="#3f3e3b" stroke-width="1.9" stroke-linecap="round" stroke-linejoin="round"><path d="M8 24.4 A11 11 0 1 1 16.2 27.6 L5.6 27.800 Z"/><path d="M16.2 12 V21.200 M11.600 16.600 H20.800"/></svg>
<svg class="a" style="left:2554px;top:390px" width="34" height="34" viewBox="-17 -17 34 34" fill="none" stroke="#3f3e3b" stroke-width="1.9" stroke-linejoin="round"><circle r="4"/><path d="M-2.38 -9.20 L-2.03 -12.13 L2.03 -12.13 L2.38 -9.20 L4.82 -8.19 L7.14 -10.01 L10.01 -7.14 L8.19 -4.82 L9.20 -2.38 L12.13 -2.03 L12.13 2.03 L9.20 2.38 L8.19 4.82 L10.01 7.14 L7.14 10.01 L4.82 8.19 L2.38 9.20 L2.03 12.13 L-2.03 12.13 L-2.38 9.20 L-4.82 8.19 L-7.14 10.01 L-10.01 7.14 L-8.19 4.82 L-9.20 2.38 L-12.13 2.03 L-12.13 -2.03 L-9.20 -2.38 L-8.19 -4.82 L-10.01 -7.14 L-7.14 -10.01 L-4.82 -8.19 Z" stroke-width="2"/></svg>
<!-- card 1 content -->
<div class="pt" style="left:2046.6px;top:463.6px">Replace loose exception with</div>
<div class="pt" style="left:2046.6px;top:496.8px;letter-spacing:1.05px">proof-of-development standard</div>
<svg class="a" style="left:2539.2px;top:459px" width="26" height="34" viewBox="0 0 26 34" fill="none" stroke="#3f3e3b" stroke-width="1.8" stroke-linejoin="round"><path d="M13 28.600 C6.6 21.800 4.400 18 4.400 13.800 A8.600 8.600 0 0 1 21.600 13.800 C21.600 18 19.400 21.800 13 28.600 Z"/><circle cx="13" cy="14" r="2.500"/></svg>
<div class="mn md" style="left:2046.6px;top:570.8px">independently developed or obtained</div>
<div class="mn md" style="left:2046.6px;top:602.4px">from a third party without restriction</div>
<div class="mn mi" style="left:2046.6px;top:633.6px">independently developed, as evidenced</div>
<div class="mn mi" style="left:2046.6px;top:662.8px">by written records...</div>
<div class="sr" style="left:2046.6px;top:730.8px">Show reasoning</div>
<div class="dm" style="left:2295.6px;top:798.6px">Dismiss</div>
<div class="ap" style="left:2438px;top:782px"></div>
<div class="apt" style="left:2467.8px;top:798.6px">Apply</div>
<!-- card 2 content -->
<svg class="a" style="left:2046px;top:891.4px" width="20" height="18" viewBox="0 0 20 18" fill="none" stroke="#86847f" stroke-width="1.7" stroke-linecap="round" stroke-linejoin="round"><path d="M4.800 11 L9.600 6.400 L14.400 11"/></svg>
<div class="t" style="left:2075.2px;top:890.2px;font-size:22.8px;color:#2b2a28;letter-spacing:.5px;-webkit-text-stroke:.45px #2b2a28">§5 Liability</div>
<div class="pt" style="left:2046.6px;top:951.6px;letter-spacing:.75px">Restore mutual damages cap</div>
<svg class="a" style="left:2539.2px;top:948.2px" width="26" height="34" viewBox="0 0 26 34" fill="none" stroke="#3f3e3b" stroke-width="1.8" stroke-linejoin="round"><path d="M13 28.600 C6.6 21.800 4.400 18 4.400 13.800 A8.600 8.600 0 0 1 21.600 13.800 C21.600 18 19.400 21.800 13 28.600 Z"/><circle cx="13" cy="14" r="2.500"/></svg>
<div class="mn md" style="left:2046.6px;top:1026.8px">Liability shall be unlimited...</div>
<div class="mn mi" style="left:2046.6px;top:1058.8px;font-size:18.85px">Aggregate liability shall not exceed $500K or</div>
<div class="mn mi" style="left:2046.6px;top:1091px;font-size:18.85px">12 months of fees</div>
<div class="sr" style="left:2046.6px;top:1155.8px">Show reasoning</div>
<div class="dm" style="left:2295.6px;top:1223.8px">Dismiss</div>
<div class="ap" style="left:2438px;top:1207.6px"></div>
<div class="apt" style="left:2469.6px;top:1224.4px">Apply</div>
<!-- input -->
<div class="a" style="left:2026px;top:1311px;width:559.5px;height:168px;border-radius:25px;background:#fff;border:1.5px solid #dfddd8;box-shadow:0 1px 5px rgba(0,0,0,.05)"></div>
<svg class="a" style="left:2054px;top:1426px" width="26" height="26" viewBox="0 0 26 26" fill="none" stroke="#4d4b47" stroke-width="1.8" stroke-linecap="round"><path d="M13 2.2 V23.8 M2.2 13 H23.8"/></svg>
<svg class="a" style="left:2118.4px;top:1425.4px" width="24.4" height="28.2" viewBox="0 0 26 30" fill="none" stroke="#5f5d58" stroke-width="1.7" stroke-linecap="round" stroke-linejoin="round"><path d="M8.4 14.6 V7.2 a1.6 1.6 0 0 1 3.2 0 V13 M11.6 12.6 V5.4 a1.6 1.6 0 0 1 3.2 0 V12.6 M14.8 12.8 V6.6 a1.600 1.600 0 0 1 3.200 0 V13.6 M18 13.6 V9.6 a1.5 1.5 0 0 1 3 0 V17.4 C21 22.4 18 25.6 13.6 25.6 C10 25.6 8 24 6.2 20.8 L3.6 16 a1.600 1.600 0 0 1 2.800 -1.600 L8.4 17.4"/></svg>
<svg class="a" style="left:2177px;top:1424.6px" width="24" height="29" viewBox="0 0 24 30" fill="none" stroke="#5f5d58" stroke-width="1.7" stroke-linecap="round"><rect x="8.2" y="3.4" width="7.6" height="14.6" rx="3.8"/><path d="M4.6 13.6 a7.4 7.4 0 0 0 14.800 0 M12 21.2 V25.4"/></svg>
<div class="t" style="left:2376.6px;top:1427.6px;font-size:22.6px;color:#4b4a46;letter-spacing:.1px;-webkit-text-stroke:.25px #4b4a46">Opus 4.6</div>
<svg class="a" style="left:2476px;top:1431px" width="18" height="18" viewBox="0 0 18 18" fill="none" stroke="#6b6964" stroke-width="1.6" stroke-linecap="round" stroke-linejoin="round"><path d="M4 6.6 L9 11.6 L14 6.600"/></svg>
<div class="a" style="left:2520px;top:1413px;width:51.4px;height:50px;border-radius:11px;background:#e6b6a7"></div>
<svg class="a" style="left:2533px;top:1425px" width="26" height="26" viewBox="0 0 26 26" fill="none" stroke="#fff6f2" stroke-width="2" stroke-linecap="round" stroke-linejoin="round"><path d="M13 21.6 V5 M5.8 12 L13 4.800 L20.200 12"/></svg>
</div></div>
<!-- status bar -->
<div class="a" style="left:348px;top:1531px;width:2288px;height:37px;background:#f4f4f3"></div>
<div class="a" style="left:348px;top:1530.4px;width:2288px;height:1.2px;background:#ecebe9"></div>
<style>.sb{position:absolute;top:1542.9px;white-space:nowrap;line-height:1;font-size:17.3px;color:#797977;letter-spacing:.1px}</style>
<div class="sb" style="left:367px">Page 1 of 1</div>
<div class="sb" style="left:480.8px;letter-spacing:.62px">3 of 298 words</div>
<div class="sb" style="left:629.8px;letter-spacing:.42px">English (United States)</div>
<svg class="a" style="left:847.6px;top:1541.4px" width="15" height="18.4" viewBox="0 0 18 22" fill="none" stroke="#6f6f6d" stroke-width="1.8" stroke-linecap="round"><circle cx="9" cy="4.6" r="2.6"/><path d="M2.600 10 H15.400 M9 10 V14.2 M9 14.2 L5.2 19.6 M9 14.2 L12.8 19.600"/></svg>
<div class="sb" style="left:873.6px;letter-spacing:.5px">Accessibility: Good to go</div>

<div class="a" style="left:466.5px;top:1549px;width:3px;height:3px;border-radius:2px;background:#e4e4e2"></div>
<div class="a" style="left:616px;top:1549px;width:3px;height:3px;border-radius:2px;background:#e4e4e2"></div>
<div class="a" style="left:830.7px;top:1549px;width:3px;height:3px;border-radius:2px;background:#e4e4e2"></div>
<div class="a" style="left:1087.7px;top:1549px;width:3px;height:3px;border-radius:2px;background:#e4e4e2"></div>
<svg class="a" style="left:2538px;top:1541px" width="26" height="18" viewBox="0 0 26 18" fill="none" stroke="#777775" stroke-width="1.6"><rect x="2" y="3.600" width="21.600" height="10.400" rx="2"/><path d="M5.600 8.800 H12" stroke-width="2.400"/></svg>
<div class="sb" style="left:2572px;font-size:16.6px;top:1543.6px">100%</div>
<!-- hand cursor -->
<svg class="a" style="left:2420px;top:760px;filter:drop-shadow(3px 5px 5px rgba(0,0,0,.38))" width="240" height="200" viewBox="0 0 1729 1441">
<path d="M740 770 C725 600 700 420 700 320 C700 260 735 235 770 235 C810 235 840 270 845 330 C855 430 875 540 885 640 C885 590 890 500 965 498 C1030 498 1055 560 1065 655 C1070 580 1085 515 1165 510 C1235 510 1265 580 1270 675 C1275 620 1300 575 1355 580 C1410 590 1425 640 1420 720 C1415 830 1400 920 1370 970 C1320 1040 1250 1100 1235 1160 L1220 1265 L1130 1260 L1062 1168 L960 1240 L770 1232 L762 1170 C700 1080 600 930 560 850 C520 790 460 720 462 680 C465 620 520 590 570 605 C640 640 690 710 740 770 Z" fill="#fff" stroke="#000" stroke-width="48" stroke-linejoin="round"/>
<g stroke="#000" stroke-width="40" stroke-linecap="round"><path d="M915 832 L896 1058"/><path d="M1046 838 L1030 1064"/><path d="M1180 846 L1161 1074"/></g>
</svg>
</div></div>
</body>
</html>
